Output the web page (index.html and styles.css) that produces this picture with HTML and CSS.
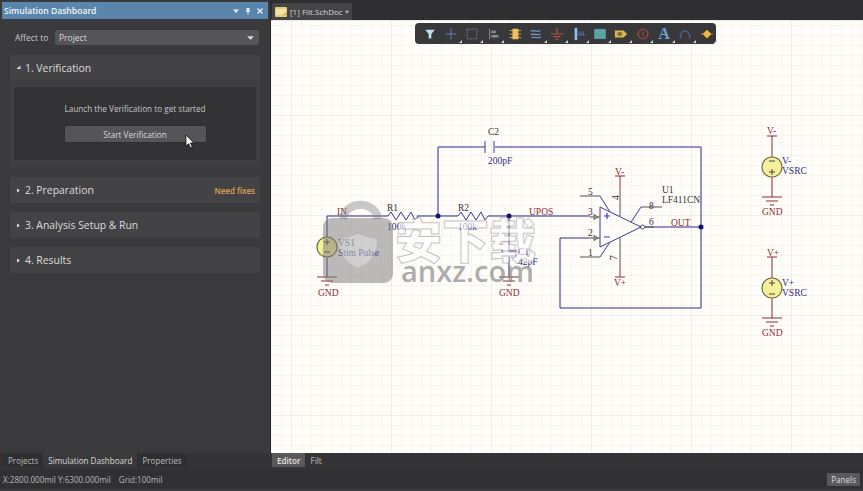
FILE: index.html
```html
<!DOCTYPE html>
<html lang="en">
<head>
<meta charset="utf-8">
<title>Simulation Dashboard</title>
<link rel="stylesheet" href="styles.css">
</head>
<body>
<div class="app">
  <div class="main">
    <aside class="panel">
      <header class="panel-title">
        <span class="panel-name">Simulation Dashboard</span>
        <span class="panel-controls">
          <svg class="ctl" viewBox="0 0 8 8"><path d="M1 2.500H7L4 6Z" fill="#e8edf2"/></svg>
          <svg class="ctl" viewBox="0 0 8 8"><path d="M2.500 1H5.500V4L6.500 5H1.500L2.500 4ZM3.600 5H4.400V8H3.600Z" fill="#e8edf2"/></svg>
          <svg class="ctl" viewBox="0 0 8 8"><path d="M1.500 1.500L6.500 6.500M6.500 1.500L1.500 6.500" stroke="#e8edf2" stroke-width="1.300"/></svg>
        </span>
      </header>
      <div class="affect">
        <span class="affect-label">Affect to</span>
        <div class="select"><span>Project</span><svg class="select-arrow" viewBox="0 0 8 4"><path d="M0 0H8L4 4Z" fill="#dcdcdc"/></svg></div>
      </div>
      <section class="step step-open">
        <div class="step-head">
          <svg class="tri" viewBox="0 0 5 5"><path d="M0.500 4H4.500V0.500Z" fill="#dedede"/></svg>
          <span class="step-title">1. Verification</span>
        </div>
        <div class="step-body">
          <p class="launch">Launch the Verification to get started</p>
          <button class="start">Start Verification</button>
        </div>
      </section>
      <section class="step">
        <div class="step-head">
          <svg class="tri" viewBox="0 0 5 5"><path d="M1 0.500L4 2.500L1 4.500Z" fill="#dedede"/></svg>
          <span class="step-title">2. Preparation</span>
          <span class="fixes">Need fixes</span>
        </div>
      </section>
      <section class="step">
        <div class="step-head">
          <svg class="tri" viewBox="0 0 5 5"><path d="M1 0.500L4 2.500L1 4.500Z" fill="#dedede"/></svg>
          <span class="step-title">3. Analysis Setup &amp; Run</span>
        </div>
      </section>
      <section class="step">
        <div class="step-head">
          <svg class="tri" viewBox="0 0 5 5"><path d="M1 0.500L4 2.500L1 4.500Z" fill="#dedede"/></svg>
          <span class="step-title">4. Results</span>
        </div>
      </section>
      <svg class="cursor" viewBox="0 0 10 15"><path d="M1 1V12L3.600 9.700L5.500 13.800L7.300 13L5.400 9H8.800Z" fill="#fff" stroke="#111" stroke-width="0.800"/></svg>
    </aside>

    <div class="editor">
      <div class="doc-tabs">
        <div class="doc-tab">
          <svg class="doc-icon" viewBox="0 0 12 10"><rect width="12" height="10" rx="1" fill="#e8cc7a"/><rect x="1" y="2" width="10" height="6" fill="#f3e2a8"/><path d="M7 8H12V5Z" fill="#c9a850"/></svg>
          <span>[1] Filt.SchDoc *</span>
        </div>
      </div>
      <div class="canvas">
        <svg class="sheet" viewBox="271 21 592 432" preserveAspectRatio="xMinYMin slice">
          <defs>
            <pattern id="minor" x="282" y="6" width="10" height="10" patternUnits="userSpaceOnUse">
              <path d="M10 0V10M0 10H10" fill="none" stroke="#f3ece3" stroke-width="1"/>
            </pattern>
            <pattern id="major" x="292" y="16" width="100" height="100" patternUnits="userSpaceOnUse">
              <path d="M100 0V100M0 100H100" fill="none" stroke="#ebe2d8" stroke-width="1"/>
            </pattern>
          </defs>
          <rect x="271" y="21" width="592" height="432" fill="#fffdfa"/>
          <rect x="271" y="21" width="592" height="432" fill="url(#minor)"/>
          <rect x="271" y="21" width="592" height="432" fill="url(#major)"/>

          <g class="wire">
            <path d="M327 237V216H388M417 216H458M488 216H590M438 216V147H485M495 147H701V308H560V238H590M645 227H701M509 216V250M509 256V277"/>
            <path d="M327 257V277"/>
          </g>
          <g class="part">
            <path d="M388 216L391 212L396 220L401 212L406 220L411 212L415 220L418 216"/>
            <path d="M458 216L461 212L466 220L471 212L476 220L481 212L485 220L488 216"/>
            <path d="M485 141V153M494 141V153"/>
            <path d="M501 251H517M501 256H517"/>
            <path d="M600 207V247L641 227Z"/>
            <path d="M600 196L610 212M600 257L610 242M641 207L631 222"/>
          </g>
          <path class="sign" d="M604 216H610M607 213V219M604 237H610"/>
          <circle class="pin-end" cx="642.500" cy="227" r="2"/>
          <path class="pin-end" d="M594 214.500L598 217L594 219.500ZM594 235.500L598 238L594 240.500Z"/>
          <g class="pin">
            <path d="M580 196H600M580 257H600M641 207H662M590 217H600M590 238H600M645 227H654"/>
          </g>
          <path class="pin" d="M620 190V216M620 238V267"/>
          <g class="power">
            <path d="M620 176V190M620 267V277M615 176H625M615 277H625"/>
            <path d="M317 277H337M321 281H333M325 285H329"/>
            <path d="M499 277H519M503 281H515M507 285H511"/>
            <path d="M762 197H782M766 201H778M770 205H774"/>
            <path d="M762 318H782M766 322H778M770 326H774"/>
            <path d="M767 136H777M772 136V157M772 177V197M767 257H777M772 257V278M772 298V318"/>
          </g>
          <circle cx="438" cy="216" r="2.500" class="dot"/>
          <circle cx="509" cy="216" r="2.500" class="dot"/>
          <circle cx="701" cy="227" r="2.500" class="dot"/>
          <g class="source">
            <circle cx="327" cy="247" r="10"/>
            <circle cx="772" cy="167" r="10"/>
            <circle cx="772" cy="288" r="10"/>
          </g>
          <path class="sign-dark" d="M324 242H330M327 239V245M324 252H330M769 161H775M769 172H775M772 169V175M769 283H775M772 280V286M769 294H775"/>

          <g class="t-des">
            <text x="387" y="211">R1</text>
            <text x="458" y="211">R2</text>
            <text x="488" y="135">C2</text>
            <text x="662" y="193">U1</text>
            <text x="662" y="203">LF411CN</text>
          </g>
          <g class="t-val">
            <text x="387" y="230">100k</text>
            <text x="458" y="230">100k</text>
            <text x="488" y="164">200pF</text>
            <text x="518" y="255">C1</text>
            <text x="518" y="265">42pF</text>
            <text x="338" y="246">VS1</text>
            <text x="338" y="256">Stim Pulse</text>
            <text x="782" y="164">V-</text>
            <text x="782" y="174">VSRC</text>
            <text x="782" y="286">V+</text>
            <text x="782" y="296">VSRC</text>
          </g>
          <g class="t-net">
            <text x="337" y="215">IN</text>
            <text x="529" y="215">UPOS</text>
            <text x="671" y="226">OUT</text>
            <text x="318" y="296">GND</text>
            <text x="499" y="296">GND</text>
            <text x="762" y="215">GND</text>
            <text x="762" y="336">GND</text>
            <text x="767" y="134">V-</text>
            <text x="767" y="256">V+</text>
            <text x="615" y="175">V-</text>
            <text x="614" y="286">V+</text>
          </g>
          <g class="t-pin">
            <text x="588" y="195">5</text>
            <text x="588" y="215">3</text>
            <text x="588" y="236">2</text>
            <text x="588" y="256">1</text>
            <text x="649" y="209">8</text>
            <text x="649" y="225">6</text>
            <text transform="translate(619 200) rotate(-90)">4</text>
            <text transform="translate(617 260) rotate(-90)">7</text>
          </g>

          <g class="mark">
            <path class="lock" d="M343 219C346 200 375 200 378 219"/>
            <rect class="lock-body" x="323" y="218" width="70" height="65" rx="9"/>
            <path class="shield" d="M358 234L377 240C377 256 370 262 358 268C346 262 339 256 339 240Z"/>
            <text class="mark-cn" x="395" y="258">安下载</text>
            <text class="mark-en" x="401" y="282">anxz.com</text>
          </g>
        </svg>
        <div class="toolbar">
          <span class="tool"><svg viewBox="0 0 16 16"><path d="M2.500 3H13.500L9.500 8V13H6.500V8Z" fill="#bfe0f2"/></svg></span>
          <span class="tool more"><svg viewBox="0 0 16 16"><path d="M8 2V14M2 8H14" stroke="#5b7fb5" stroke-width="1.200"/></svg></span>
          <span class="tool more"><svg viewBox="0 0 16 16"><rect x="2.500" y="2.500" width="11" height="11" fill="none" stroke="#7d8db0" stroke-dasharray="1.500 1"/></svg></span>
          <span class="tool more"><svg viewBox="0 0 16 16"><path d="M3 2V14" stroke="#999"/><path d="M5 4H10V7H5ZM5 9H13V12H5Z" fill="#8b8b8b"/></svg></span>
          <span class="tool"><svg viewBox="0 0 16 16"><rect x="5" y="2" width="7" height="12" fill="#efc15d"/><path d="M2 4H5M2 8H5M2 12H5M12 4H15M12 8H15M12 12H15" stroke="#d7b35a"/></svg></span>
          <span class="tool more"><svg viewBox="0 0 16 16"><path d="M2 5C5 2 8 7 13 4M2 9C5 6 8 11 13 8M3 12.500C6 10 9 14 14 11.500" fill="none" stroke="#6f9fd8" stroke-width="1.300"/></svg></span>
          <span class="tool more"><svg viewBox="0 0 16 16"><path d="M8 1V8M1 8H15M4 11H12M6.500 14H9.500" stroke="#c0503c" stroke-width="1.400"/></svg></span>
          <span class="tool more"><svg viewBox="0 0 16 16"><rect x="3" y="1" width="3" height="14" fill="#8fbdf0"/><path d="M6 9H15" stroke="#5a78b0"/><path d="M8 5V9M10.500 5V9M13 5V9" stroke="#5a78b0"/></svg></span>
          <span class="tool more"><svg viewBox="0 0 16 16"><rect x="2" y="3" width="12" height="10" fill="#58a59a" stroke="#6d9fd0"/></svg></span>
          <span class="tool more"><svg viewBox="0 0 16 16"><path d="M1 4H11L15 8L11 12H1Z" fill="#d8b756"/><rect x="4" y="6" width="5" height="4" fill="#7d6a2e"/></svg></span>
          <span class="tool more"><svg viewBox="0 0 16 16"><circle cx="8" cy="8" r="5.500" fill="none" stroke="#b0473e" stroke-width="1.200"/><path d="M8 5V11M1 8H3M13 8H15" stroke="#b0473e" stroke-width="1.200"/></svg></span>
          <span class="tool more"><span class="tool-a">A</span></span>
          <span class="tool more"><svg viewBox="0 0 16 16"><path d="M2.500 13C2.500 1.500 13.500 1.500 13.500 13" fill="none" stroke="#4d6a8c" stroke-width="1.400"/></svg></span>
          <span class="tool more"><svg viewBox="0 0 16 16"><path d="M1 8H15" stroke="#c99a3a"/><path d="M8 3L13 8L8 13L3 8Z" fill="#f0b93c"/></svg></span>
        </div>
      </div>
    </div>
  </div>

  <div class="tabs-row">
    <nav class="tabs-left">
      <span class="btab">Projects</span>
      <span class="btab btab-on">Simulation Dashboard</span>
      <span class="btab">Properties</span>
    </nav>
    <nav class="tabs-right">
      <span class="etab etab-on">Editor</span>
      <span class="etab">Filt</span>
    </nav>
  </div>
  <footer class="status">
    <span class="coords">X:2800.000mil Y:6300.000mil</span>
    <span class="grid">Grid:100mil</span>
    <span class="panels">Panels</span>
  </footer>
</div>
</body>
</html>
```
FILE: styles.css
```css
* { box-sizing: border-box; }
html, body { margin: 0; height: 100%; background: #3b3a3c; overflow: hidden; }
body { font-family: "Open Sans", "Noto Sans", sans-serif; color: #d8d8d8; }
.app { width: 863px; height: 491px; display: flex; flex-direction: column; }
.main { flex: 0 0 453px; display: flex; }

.panel { position: relative; flex: 0 0 271px; padding-top: 2px; background: #3a393b; border-right: 1px solid #2b2a2c; }
.panel-title { height: 17px; margin: 0 2px; padding: 0 4px 0 2px; display: flex; align-items: center; justify-content: space-between; background: #5a86ad; }
.panel-name { font-size: 8.6px; font-weight: 600; color: #f0f4f8; }
.panel-controls { display: flex; gap: 4px; align-items: center; }
.ctl { width: 8px; height: 8px; display: block; }

.affect { height: 15px; margin: 11px 11px 10px 15px; display: flex; align-items: center; }
.affect-label { width: 40px; font-size: 8.5px; color: #c8c8c8; }
.select { flex: 1; height: 15px; padding: 0 5px 0 4px; display: flex; align-items: center; justify-content: space-between; background: #555456; border-radius: 2px; font-size: 8.5px; color: #d8d8d8; }
.select-arrow { width: 7px; height: 4px; }

.step { margin: 0 10px 9px; background: #3f3e40; }
.step-open { margin-bottom: 10px; padding-bottom: 7px; }
.step-head { height: 26px; padding: 0 5px 0 6px; display: flex; align-items: center; background: #434244; }
.step-open .step-head { height: 25px; }
.tri { width: 5px; height: 5px; margin-right: 4px; flex: none; }
.step-title { font-size: 10.4px; font-weight: 500; color: #dcdcdc; }
.fixes { margin-left: auto; font-size: 8px; font-weight: 600; color: #e0a050; }
.step-body { height: 73px; margin: 7px 4px 0; padding-top: 16px; background: #333234; display: flex; flex-direction: column; align-items: center; }
.launch { margin: 0 0 11px; font-size: 8.2px; color: #c4c4c4; }
.start { width: 143px; height: 18px; padding: 0; border: 1px solid #2e2d2f; border-radius: 2px; background: #555456; font-family: inherit; font-size: 8.2px; color: #dadada; }
.cursor { position: absolute; left: 185px; top: 134px; width: 10px; height: 15px; }

.editor { flex: 1; display: flex; flex-direction: column; min-width: 0; }
.doc-tabs { height: 21px; padding: 3px 0 0 1px; background: #2f2e30; border-bottom: 1px solid #e8e8e8; }
.doc-tab { width: 80px; height: 17px; padding-left: 3px; display: flex; align-items: center; gap: 3px; background: #454446; font-size: 8px; color: #d8d8d8; }
.doc-icon { width: 12px; height: 10px; flex: none; }

.canvas { position: relative; flex: 1; overflow: hidden; }
.sheet { display: block; width: 592px; height: 432px; }
.toolbar { position: absolute; left: 144px; top: 2px; width: 301px; height: 21px; padding-left: 4px; display: flex; align-items: center; background: #38383a; border-radius: 4px; }
.tool { position: relative; flex: 0 0 21.300px; height: 21px; display: flex; align-items: center; justify-content: center; }
.tool svg { width: 14px; height: 14px; display: block; }
.more::after { content: ""; position: absolute; right: 0; bottom: 1px; border-style: solid; border-width: 0 0 3px 3px; border-color: transparent transparent #d8d8d8 transparent; }
.tool-a { font-family: "Liberation Serif", serif; font-size: 16px; font-weight: 700; line-height: 1; color: #6f9fd8; }

.wire { fill: none; stroke: #2b2b8c; stroke-width: 1; }
.part { fill: none; stroke: #3a3aa0; stroke-width: 1; }
.pin { fill: none; stroke: #555; stroke-width: 1; }
.pin-end { fill: none; stroke: #333; stroke-width: 0.800; }
.power { fill: none; stroke: #8c2f2f; stroke-width: 1; }
.sign { fill: none; stroke: #3a3ad0; stroke-width: 1.200; }
.sign-dark { fill: none; stroke: #444; stroke-width: 1; }
.dot { fill: #14146e; }
.source circle { fill: #f6ef9c; stroke: #6e6e40; stroke-width: 1.200; }
.t-des, .t-val, .t-net, .t-pin { font-family: "Liberation Serif", serif; font-size: 9.500px; }
.t-des { fill: #333; }
.t-val { fill: #2c2c86; }
.t-net { fill: #8c2f2f; }
.t-pin { fill: #333; }

.mark { pointer-events: none; }
.lock { fill: none; stroke: #8a8a8a; stroke-width: 8; opacity: 0.45; }
.lock-body { fill: #777; opacity: 0.5; }
.shield { fill: #fff; opacity: 0.3; }
.mark-cn { font-family: "Noto Sans CJK SC", sans-serif; font-size: 47px; font-weight: 900; fill: #fff; fill-opacity: 0.6; stroke: #8a8a8a; stroke-opacity: 0.5; stroke-width: 1; }
.mark-en { font-family: "Open Sans", sans-serif; font-size: 29px; font-weight: 600; fill: #8a8a8a; fill-opacity: 0.7; }

.tabs-row { flex: 0 0 17px; padding-bottom: 3px; display: flex; background: #343335; }
.tabs-left { flex: 0 0 271px; padding-left: 3px; display: flex; }
.btab { padding: 0 5px; display: flex; align-items: center; background: #2f2e30; font-size: 8.1px; color: #bcbcbc; }
.btab-on { background: #3a393b; color: #dadada; }
.tabs-right { flex: 1; padding-left: 1px; display: flex; }
.etab { padding: 0 5px; display: flex; align-items: center; background: #343335; font-size: 8.1px; color: #c4c4c4; }
.etab-on { background: #59585a; color: #e4e4e4; font-weight: 600; }

.status { flex: 0 0 19px; padding: 0 3px; margin-bottom: 2px; display: flex; align-items: center; gap: 8px; background: #313032; font-size: 8.1px; color: #b8b8b8; }
.panels { margin-left: auto; padding: 1px 4px; background: #59585a; border-radius: 1px; color: #dcdcdc; }
```
